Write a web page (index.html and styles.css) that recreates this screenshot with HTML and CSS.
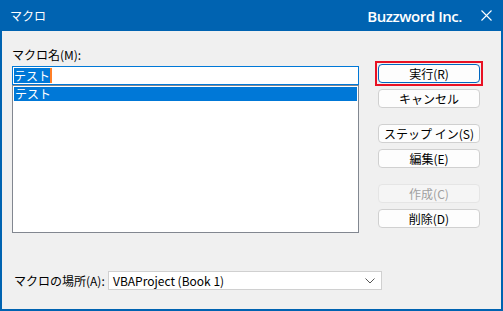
FILE: index.html
```html
<!DOCTYPE html>
<html lang="ja">
<head>
  <meta charset="UTF-8" />
  <title>マクロ</title>
  <link rel="stylesheet" href="styles.css">
</head>
<body>
  <div class="window">
    <div class="titlebar">
      <span class="title">マクロ</span>
      <span class="brand">Buzzword Inc.</span>
      <svg class="close" width="11" height="11" viewBox="0 0 11 11">
        <path d="M0.5 0.5L10.5 10.5M10.5 0.5L0.5 10.5" stroke="#fff" stroke-width="1.1" fill="none"/>
      </svg>
    </div>

    <div class="main">
      <div class="left">
        <div class="label">マクロ名(M):</div>
        <div class="name-input"><span class="sel">テスト</span><span class="caret"></span></div>
        <div class="macro-list">
          <div class="item active">テスト</div>
        </div>
      </div>

      <div class="buttons">
        <div class="highlight">
          <button class="btn default">実行(R)</button>
        </div>
        <button class="btn">キャンセル</button>
        <button class="btn spaced">ステップ イン(S)</button>
        <button class="btn">編集(E)</button>
        <button class="btn spaced" disabled>作成(C)</button>
        <button class="btn">削除(D)</button>
      </div>
    </div>

    <div class="location">
      <span class="label">マクロの場所(A):</span>
      <div class="select">
        <span>VBAProject (Book 1)</span>
        <svg width="10" height="6" viewBox="0 0 10 6">
          <path d="M0.5 0.5L5 5L9.5 0.5" stroke="#555" stroke-width="1" fill="none"/>
        </svg>
      </div>
    </div>
  </div>
</body>
</html>
```

FILE: styles.css
```css
body {
  margin: 0;
  font-family: "Noto Sans CJK JP", "Noto Sans", sans-serif;
  font-size: 12px;
  color: #000;
}

.window {
  width: 503px;
  height: 311px;
  box-sizing: border-box;
  background-color: #f0f0f0;
  border: 2px solid #0063b1;
  border-top: none;
  display: flex;
  flex-direction: column;
}

.titlebar {
  height: 31px;
  margin: 0 -2px;
  background-color: #0063b1;
  color: #fff;
  display: flex;
  align-items: center;
  padding: 0 11px 0 10px;
}

.title {
  flex-grow: 1;
  font-size: 12px;
}

.brand {
  font-family: "Open Sans", sans-serif;
  font-weight: 600;
  font-size: 15px;
  margin-right: 19px;
  letter-spacing: -0.45px;
}

.close {
  display: block;
}

.main {
  display: grid;
  grid-template-columns: 347px 102px;
  column-gap: 19px;
  padding: 16px 0 0 10px;
}

.label {
  line-height: 16px;
  height: 16px;
}

.name-input {
  margin-top: 3px;
  height: 19px;
  box-sizing: border-box;
  border: 1px solid #0078d7;
  background: #fff;
  display: flex;
  align-items: center;
  padding-left: 1px;
  line-height: 15px;
}

.sel {
  background-color: #0078d7;
  color: #fff;
}

.caret {
  width: 2px;
  height: 15px;
  background-color: #ff7f27;
}

.macro-list {
  height: 148px;
  box-sizing: border-box;
  border: 1px solid #828790;
  background: #fff;
  padding: 1px;
}

.item {
  height: 14px;
  line-height: 14px;
  padding-left: 1px;
}

.item.active {
  background-color: #0078d7;
  color: #fff;
}

.buttons {
  display: flex;
  flex-direction: column;
  gap: 6px;
  padding-top: 17px;
}

.highlight {
  display: flex;
  flex-direction: column;
  margin: -3px -3px 0 -3px;
  padding: 1px;
  border: 2px solid #e81123;
}

.btn {
  height: 19px;
  box-sizing: border-box;
  padding: 0;
  font-family: inherit;
  font-size: 12px;
  line-height: 15px;
  color: #000;
  background-color: #fdfdfd;
  border: 1px solid #d0d0d0;
  border-radius: 4px;
}

.highlight + .btn {
  margin-top: -3px;
}

.btn.spaced {
  margin-top: 10px;
}

.btn.default {
  border-color: #0067c0;
}

.btn:disabled {
  color: #a0a0a0;
  background-color: #f5f5f5;
  border-color: #e5e5e5;
}

.location {
  display: flex;
  align-items: center;
  margin-top: 38px;
  padding-left: 12px;
}

.location .label {
  width: 94px;
}

.select {
  width: 274px;
  height: 19px;
  box-sizing: border-box;
  border: 1px solid #d0d0d0;
  background: #fff;
  display: flex;
  align-items: center;
  justify-content: space-between;
  padding: 0 6px 0 4px;
}

.select svg {
  display: block;
}
```
